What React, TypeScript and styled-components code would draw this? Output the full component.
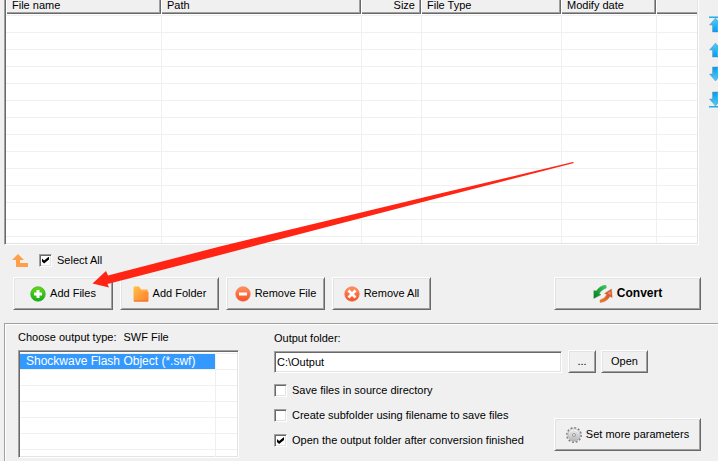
import React, { useState } from "react";
import styled, { createGlobalStyle, css } from "styled-components";

const face = "#f0f0f0";
const light = "#e3e3e3";
const shade = "#a0a0a0";
const dark = "#696969";

const GlobalStyle = createGlobalStyle`
  *, *::before, *::after { box-sizing: border-box; }
  html, body { margin: 0; background: ${face}; }
  body { overflow: hidden; }
  body, button, input, table {
    font-family: "Liberation Sans", Arial, sans-serif;
    font-size: 11px;
    line-height: 13px;
    color: #000;
  }
`;

const sunken = css`
  border: 1px solid;
  border-color: ${shade} #fff #fff ${shade};
  box-shadow: inset 1px 1px ${dark}, inset -1px -1px ${light};
`;

const Page = styled.div`
  display: flex;
  flex-direction: column;
  min-height: 100vh;
  position: relative;
  padding-left: 4px;
`;

const FileArea = styled.main`
  display: flex;
  gap: 9px;
`;

const FileList = styled.div`
  flex: 1;
  min-width: 0;
  height: 245px;
  padding: 0 1px 1px;
  overflow: hidden;
  background: #fff;
  border: solid;
  border-width: 0 1px 1px;
  border-color: #fff #fff #fff ${shade};
  box-shadow: inset 1px 0 ${dark}, inset -1px -1px ${light};
`;

const Clip = styled.div`
  height: 100%;
  overflow: hidden;
`;

const Grid = styled.table`
  width: 100%;
  table-layout: fixed;
  border-collapse: separate;
  border-spacing: 0;
`;

const Col = styled.col<{ $width?: number }>`
  width: ${(p) => (p.$width ? `${p.$width}px` : "auto")};
`;

const HeadCell = styled.th<{ $right?: boolean }>`
  height: 15px;
  padding: 0 6px 3px;
  font-weight: normal;
  line-height: 11px;
  white-space: nowrap;
  text-align: ${(p) => (p.$right ? "right" : "left")};
  background: ${face};
  border-bottom: 1px solid #fff;
  box-shadow: inset 1px 0 #fff, inset -1px -1px ${dark}, inset -2px -2px ${shade};

  &:last-child {
    box-shadow: inset 1px 0 #fff, inset 0 -1px ${dark}, inset 0 -2px ${shade};
  }
`;

const Cell = styled.td<{ $height: number; $selected?: boolean }>`
  height: ${(p) => p.$height}px;
  padding: 0 6px;
  border-top: 1px solid ${face};
  font-size: 12px;
  line-height: 15px;
  white-space: nowrap;

  & + & {
    border-left: 1px solid ${face};
  }

  ${(p) =>
    p.$selected &&
    css`
      color: #fff;
      background: #3399ff;
      background-clip: padding-box;
    `}
`;

const MoveTools = styled.div`
  width: 10px;
  flex: none;
  display: flex;
  flex-direction: column;
  gap: 8px;
  padding: 16px 0 0 1px;
  overflow: hidden;
`;

const IconButton = styled.button`
  display: block;
  flex: none;
  width: 17px;
  height: 17px;
  padding: 0;
  border: 0;
  background: none;

  svg { display: block; }
`;

const SelectBar = styled.div`
  display: flex;
  align-items: center;
  gap: 10px;
  height: 32px;
  padding: 0 8px 2px;
`;

const CheckLabel = styled.label`
  display: flex;
  align-items: center;
  gap: 5px;
  white-space: nowrap;
`;

const CheckBox = styled.input`
  appearance: none;
  flex: none;
  width: 13px;
  height: 13px;
  margin: 0;
  padding: 1px;
  background: #fff;
  ${sunken}

  &:checked::after {
    content: "";
    display: block;
    width: 7px;
    height: 7px;
    margin: 1px;
    background: #000;
    clip-path: polygon(0 28%, 30% 56%, 100% 0, 100% 42%, 30% 100%, 0 72%);
  }
`;

const Actions = styled.div`
  display: flex;
  gap: 7px;
  padding: 0 17px 13px 9px;
`;

const PushButton = styled.button<{ $width: number; $small?: boolean; $strong?: boolean }>`
  display: flex;
  align-items: center;
  justify-content: center;
  gap: 4px;
  flex: none;
  width: ${(p) => p.$width}px;
  height: ${(p) => (p.$small ? 23 : 33)}px;
  padding: 0;
  white-space: nowrap;
  background: ${face};
  border: 1px solid;
  border-color: #fff ${dark} ${dark} #fff;
  box-shadow: inset 1px 1px ${light}, inset -1px -1px ${shade};

  ${(p) =>
    p.$strong &&
    css`
      margin-left: auto;
      font-size: 12px;
      font-weight: bold;
    `}

  svg { flex: none; }
`;

const Settings = styled.section`
  flex: 1;
  display: flex;
  gap: 35px;
  padding: 5px 19px 3px 12px;
  border: solid ${shade};
  border-width: 1px 0 0 1px;
  box-shadow: inset 1px 1px #fff;
  margin-right: -2px;
`;

const TypeColumn = styled.div`
  flex: none;
  width: 222px;
  padding-left: 1px;
`;

const TypeCaption = styled.div`
  display: flex;
  gap: 7px;
  height: 21px;
  align-items: center;
  padding-bottom: 4px;
`;

const TypeBox = styled.div`
  height: 108px;
  padding: 2px 1px 1px;
  overflow: hidden;
  background: #fff;
  ${sunken}
`;

const OutputColumn = styled.div`
  flex: 1;
  min-width: 0;
`;

const OutputCaption = styled.label`
  display: flex;
  align-items: center;
  height: 21px;
  padding-bottom: 2px;
`;

const FolderRow = styled.div`
  display: flex;
  align-items: flex-end;
  gap: 5px;
  padding-right: 53px;
`;

const FolderInput = styled.input`
  flex: 1;
  min-width: 0;
  height: 22px;
  margin: 0 1px 0 0;
  padding: 0 2px 1px;
  background: #fff;
  outline: none;
  ${sunken}
`;

const OptionRow = styled.div`
  display: flex;
  justify-content: space-between;
  align-items: flex-start;
`;

const Options = styled.div`
  display: flex;
  flex-direction: column;
  gap: 12px;
  padding-top: 11px;
`;

const MoreSlot = styled.div`
  padding-top: 45px;
`;

const Pointer = styled.svg`
  position: absolute;
  left: 92px;
  top: 161px;
  pointer-events: none;
`;

function MoveIcon({ down, bar }: { down?: boolean; bar?: boolean }) {
  return (
    <svg width="16" height="17" viewBox="0 0 16 17" aria-hidden="true">
      <defs>
        <linearGradient id="sky" x1="0" y1="0" x2="0" y2="1">
          <stop offset="0" stopColor="#58cdfa" />
          <stop offset="1" stopColor="#0798ee" />
        </linearGradient>
      </defs>
      <g transform={down ? "matrix(1 0 0 -1 0 17)" : undefined}>
        {bar && <path d="M0 .5H13V2H0Z" fill="#24adeb" />}
        <path d="M6.500 2 12.500 9H9.500V16H3.500V9H.5Z" fill="url(#sky)" stroke="#7194a5" strokeWidth=".5" />
        <path d="M6.500 3.500 10 8H8.500V15" fill="none" stroke="#20c4ff" />
      </g>
    </svg>
  );
}

function UpFolderIcon() {
  return (
    <svg width="17" height="13" viewBox="0 0 17 13" aria-hidden="true">
      <path d="M6 0 12 6H8V9H16V13H4V6H0Z" fill="#ff9f4a" />
    </svg>
  );
}

function RoundIcon({ kind }: { kind: "add" | "minus" | "cross" }) {
  const add = kind === "add";
  const id = `round-${kind}`;
  return (
    <svg width="16" height="16" viewBox="0 0 16 16" aria-hidden="true">
      <defs>
        <linearGradient id={id} x1="0" y1="0" x2="0" y2="1">
          <stop offset="0" stopColor={add ? "#65db12" : "#ff9363"} />
          <stop offset="1" stopColor={add ? "#12ad16" : "#f94c20"} />
        </linearGradient>
      </defs>
      <circle cx="8" cy="8" r="7.300" fill={`url(#${id})`} stroke={add ? "#23a51b" : "#ed7950"} strokeWidth=".6" />
      {add && <path d="M8 4V12M4 8H12" stroke="#fff" strokeWidth="3" />}
      {kind === "minus" && <path d="M4 8H12" stroke="#fff" strokeWidth="3" />}
      {kind === "cross" && <path d="M4.500 4.500 11.500 11.500M11.500 4.500 4.500 11.500" stroke="#fff" strokeWidth="2.800" />}
    </svg>
  );
}

function FolderIcon() {
  return (
    <svg width="16" height="16" viewBox="0 0 16 16" aria-hidden="true">
      <defs>
        <linearGradient id="folder" x1="0" y1="0" x2="1" y2="1">
          <stop offset="0" stopColor="#ffc247" />
          <stop offset="1" stopColor="#ff7d2c" />
        </linearGradient>
      </defs>
      <path d="M.5 1.500Q.5.5 1.500.5H6L8 3.500H14.500V5L15.500 6V14.500Q15.500 15.500 14.500 15.500H1.500Q.5 15.500.5 14.500Z" fill="url(#folder)" />
      <path d="M1 15H15" stroke="#ef6a27" />
      <path d="M8 4H14V5H8Z" fill="#ffb15b" />
    </svg>
  );
}

function ConvertIcon() {
  return (
    <svg width="20" height="18" viewBox="0 0 20 18" aria-hidden="true">
      <defs>
        <linearGradient id="leaf" x1="1" y1="0" x2="0" y2="1">
          <stop offset="0" stopColor="#2ed45a" />
          <stop offset="1" stopColor="#08751c" />
        </linearGradient>
        <linearGradient id="ember" x1="1" y1="0" x2="0" y2="1">
          <stop offset="0" stopColor="#c54b2c" />
          <stop offset="1" stopColor="#ff7a16" />
        </linearGradient>
      </defs>
      <path d="M13 .3Q7 .3 3.200 6L.8 5.500.8 13.500 8 9.800 6.300 8.500Q8.500 4.500 13.300 3Z" fill="url(#leaf)" stroke="#579267" strokeWidth=".4" />
      <path d="M7 17.500Q13.500 17 17 11.500L19.200 12.500 18.500 4 11.500 8.500 13.800 9.500Q12 13.500 7 15Z" fill="url(#ember)" stroke="#b7745a" strokeWidth=".4" />
      <path d="M14.500 8 17.500 6 18 10.500Z" fill="#f38a70" />
    </svg>
  );
}

function GearIcon() {
  return (
    <svg width="16" height="16" viewBox="0 0 16 16" aria-hidden="true">
      <defs>
        <linearGradient id="steel" x1="0" y1="0" x2="0" y2="1">
          <stop offset="0" stopColor="#fafafa" />
          <stop offset="1" stopColor="#b4b4b4" />
        </linearGradient>
      </defs>
      <circle cx="8" cy="8" r="7.200" fill="none" stroke="#77777d" strokeWidth="1.400" strokeDasharray="2 1.770" />
      <circle cx="8" cy="8" r="6.200" fill="url(#steel)" stroke="#a2a2aa" strokeWidth=".6" />
      <circle cx="8" cy="8" r="1.500" fill="#eee" stroke="#85858b" strokeWidth=".8" />
      <circle cx="8" cy="8" r="3.500" fill="none" stroke="#c4c4c4" strokeWidth=".5" />
    </svg>
  );
}

const columns = [
  { label: "File name", width: 155 },
  { label: "Path", width: 200 },
  { label: "Size", width: 60, right: true },
  { label: "File Type", width: 140 },
  { label: "Modify date", width: 95 },
  { label: "" },
];

const moves = [
  { label: "Move to top", bar: true },
  { label: "Move up" },
  { label: "Move down", down: true },
  { label: "Move to bottom", down: true, bar: true },
];

function Option({ label, initial = false }: { label: string; initial?: boolean }) {
  const [on, setOn] = useState(initial);
  return (
    <CheckLabel>
      <CheckBox type="checkbox" checked={on} onChange={(e) => setOn(e.target.checked)} />
      {label}
    </CheckLabel>
  );
}

export default function App() {
  const [folder, setFolder] = useState("C:\\Output");
  return (
    <Page>
      <GlobalStyle />
      <FileArea>
        <FileList>
          <Clip>
            <Grid>
              <colgroup>
                {columns.map((c) => <Col key={c.label} $width={c.width} />)}
              </colgroup>
              <thead>
                <tr>
                  {columns.map((c) => <HeadCell key={c.label} $right={c.right}>{c.label}</HeadCell>)}
                </tr>
              </thead>
              <tbody>
                {Array.from({ length: 14 }, (_, row) => (
                  <tr key={row}>
                    {columns.map((c) => <Cell key={c.label} $height={17} />)}
                  </tr>
                ))}
              </tbody>
            </Grid>
          </Clip>
        </FileList>
        <MoveTools>
          {moves.map((m) => (
            <IconButton key={m.label} type="button" aria-label={m.label}>
              <MoveIcon down={m.down} bar={m.bar} />
            </IconButton>
          ))}
        </MoveTools>
      </FileArea>
      <SelectBar>
        <IconButton type="button" aria-label="Up one level"><UpFolderIcon /></IconButton>
        <Option label="Select All" initial />
      </SelectBar>
      <Actions>
        <PushButton type="button" $width={100}><RoundIcon kind="add" />Add Files</PushButton>
        <PushButton type="button" $width={99}><FolderIcon />Add Folder</PushButton>
        <PushButton type="button" $width={99}><RoundIcon kind="minus" />Remove File</PushButton>
        <PushButton type="button" $width={99}><RoundIcon kind="cross" />Remove All</PushButton>
        <PushButton type="button" $width={147} $strong><ConvertIcon />Convert</PushButton>
      </Actions>
      <Settings>
        <TypeColumn>
          <TypeCaption><span>Choose output type:</span><span>SWF File</span></TypeCaption>
          <TypeBox>
            <Grid aria-label="Output type">
              <colgroup><Col $width={195} /><Col /></colgroup>
              <tbody>
                <tr>
                  <Cell $height={16} $selected>Shockwave Flash Object (*.swf)</Cell>
                  <Cell $height={16} />
                </tr>
                {Array.from({ length: 6 }, (_, row) => (
                  <tr key={row}><Cell $height={16} /><Cell $height={16} /></tr>
                ))}
              </tbody>
            </Grid>
          </TypeBox>
        </TypeColumn>
        <OutputColumn>
          <OutputCaption htmlFor="output-folder">Output folder:</OutputCaption>
          <FolderRow>
            <FolderInput id="output-folder" value={folder} onChange={(e) => setFolder(e.target.value)} />
            <PushButton type="button" $width={28} $small>...</PushButton>
            <PushButton type="button" $width={47} $small>Open</PushButton>
          </FolderRow>
          <OptionRow>
            <Options>
              <Option label="Save files in source directory" />
              <Option label="Create subfolder using filename to save files" />
              <Option label="Open the output folder after conversion finished" initial />
            </Options>
            <MoreSlot>
              <PushButton type="button" $width={147}><GearIcon />Set more parameters</PushButton>
            </MoreSlot>
          </OptionRow>
        </OutputColumn>
      </Settings>
      <Pointer width="484" height="128" viewBox="92 161 484 128" aria-hidden="true">
        <path d="M92.500 283.500 106 271 108 275.500 220 246.500 440 193.500 573 162 574 163 440 197.500 220 255 107.500 284 109 287.500Z" fill="#ff2414" />
      </Pointer>
    </Page>
  );
}
